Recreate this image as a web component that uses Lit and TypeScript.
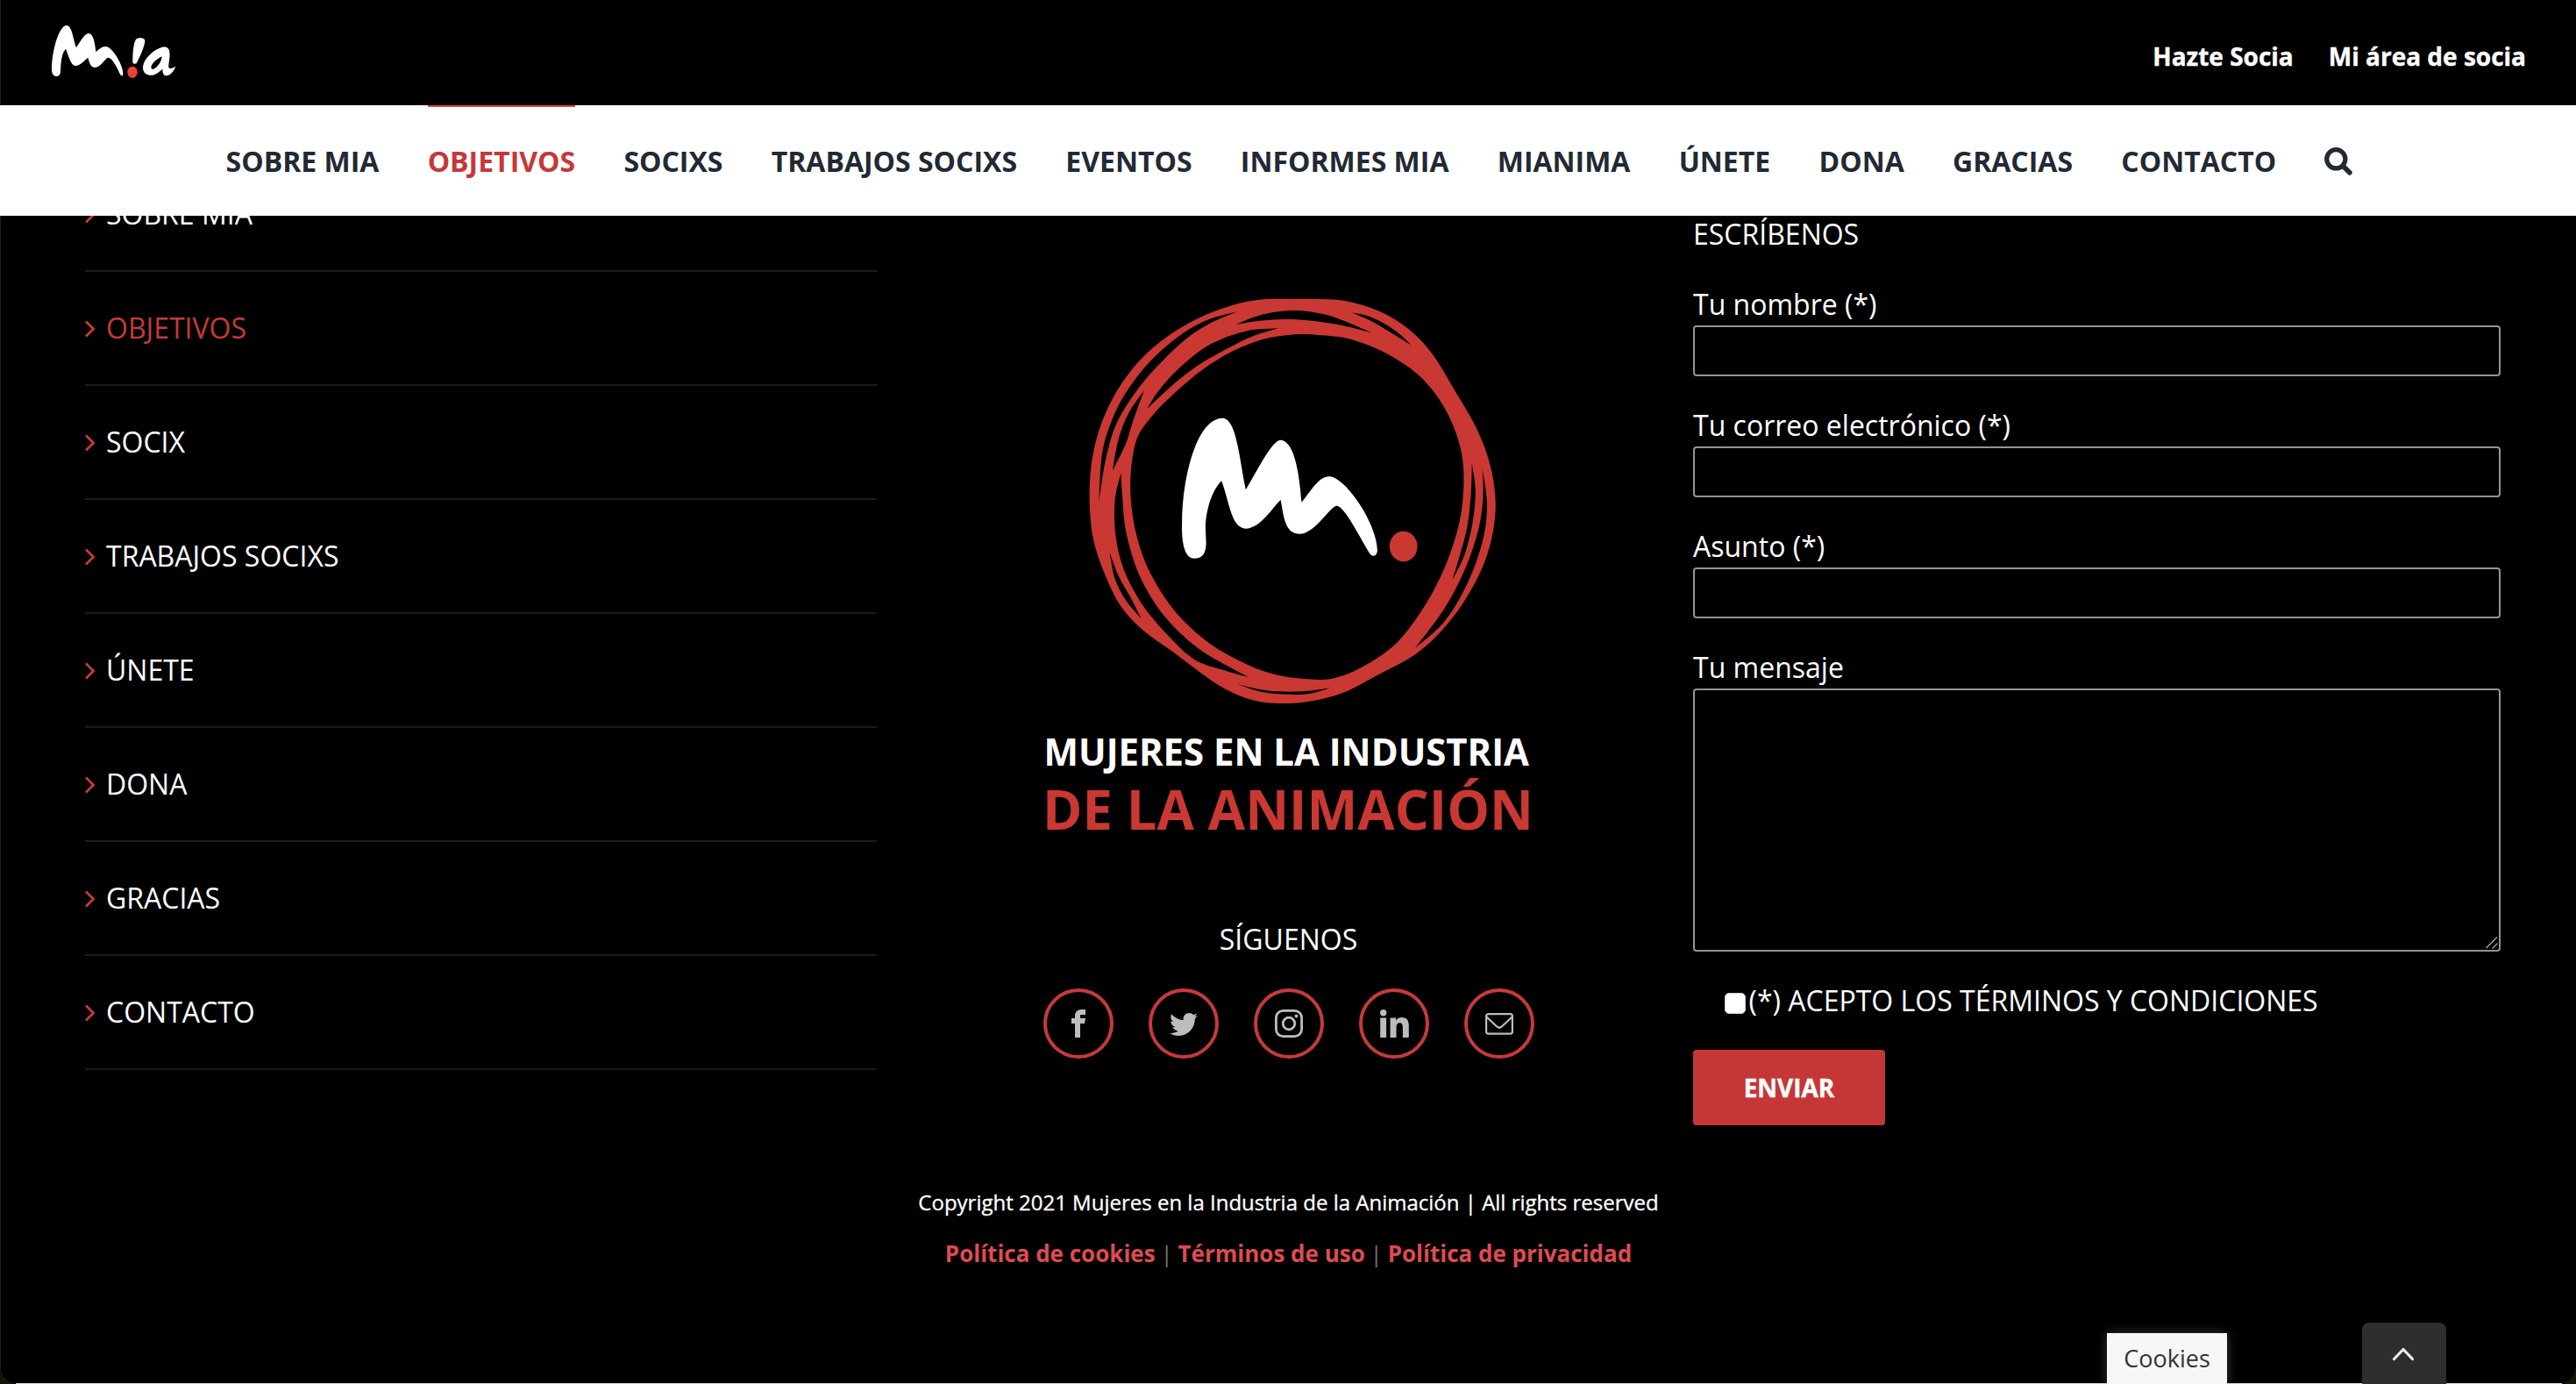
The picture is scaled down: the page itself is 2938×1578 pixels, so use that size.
import { LitElement, html, svg, css } from "lit";
import { customElement, property } from "lit/decorators.js";
import { classMap } from "lit/directives/class-map.js";

type Pt = [number, number];

/** Catmull-Rom spline through the points, as cubic bezier path data. */
function spline(points: Pt[], closed: boolean, start = true): string {
  const n = points.length;
  const at = (i: number): Pt =>
    closed ? points[(i + n) % n] : points[Math.min(n - 1, Math.max(0, i))];
  let d = start ? `M${points[0].join(" ")}` : "";
  const last = closed ? n : n - 1;
  for (let i = 0; i < last; i++) {
    const [p0, p1, p2, p3] = [at(i - 1), at(i), at(i + 1), at(i + 2)];
    d += `C${(p1[0] + (p2[0] - p0[0]) / 6).toFixed(1)} ${(p1[1] + (p2[1] - p0[1]) / 6).toFixed(1)} ${(p2[0] - (p3[0] - p1[0]) / 6).toFixed(1)} ${(p2[1] - (p3[1] - p1[1]) / 6).toFixed(1)} ${p2[0]} ${p2[1]}`;
  }
  return closed ? d + "Z" : d;
}

/** A gap between two brush strands: two splines that meet in sharp tips. */
function sliver(tipA: Pt, sideA: Pt[], tipB: Pt, sideB: Pt[]): string {
  return (
    spline([tipA, ...sideA, tipB], false) +
    spline([tipB, ...sideB, tipA], false, false) +
    "Z"
  );
}

const RING_OUTER: Pt[] = [
  [800, 93], [700, 94], [600, 113], [485, 158], [380, 222], [290, 303], [220, 398],
  [170, 500], [140, 600], [125, 710], [126, 830], [140, 930], [175, 1035], [225, 1140],
  [300, 1225], [400, 1300], [480, 1362], [570, 1425], [670, 1466], [780, 1476],
  [880, 1464], [975, 1435], [1080, 1378], [1200, 1310], [1290, 1227], [1375, 1110],
  [1440, 970], [1468, 820], [1455, 680], [1410, 545], [1330, 400], [1260, 282],
  [1180, 195], [1080, 133], [970, 99], [880, 93],
];
const RING_INNER: Pt[] = [
  [870, 215], [980, 228], [1090, 270], [1190, 333], [1258, 402], [1310, 485],
  [1345, 575], [1362, 670], [1359, 790], [1338, 900], [1290, 1035], [1220, 1165],
  [1135, 1275], [1030, 1350], [940, 1388], [870, 1394], [750, 1380], [640, 1340],
  [520, 1270], [410, 1165], [325, 1030], [277, 890], [259, 735], [276, 585],
  [325, 500], [405, 415], [500, 333], [600, 270], [700, 230], [790, 215],
];
const RING_GAPS: string[] = [
  sliver([615, 135], [[520, 162], [430, 212], [330, 300], [245, 412], [195, 515], [165, 625]], [155, 785],
    [[164, 720], [182, 620], [217, 510], [290, 392], [365, 305], [445, 228], [525, 175]]),
  sliver([305, 405], [[255, 480], [220, 570]], [200, 680], [[243, 590], [268, 510]]),
  sliver([750, 193], [[640, 203], [520, 250], [420, 330], [350, 410]], [315, 468],
    [[390, 395], [480, 322], [570, 268], [660, 222]]),
  sliver([608, 180], [[700, 145], [800, 132], [900, 145], [980, 173]], [1058, 208],
    [[960, 183], [860, 167], [770, 162], [680, 168]]),
  sliver([990, 138], [[1060, 156], [1135, 200]], [1192, 252], [[1130, 213], [1060, 170]]),
  sliver([1390, 655], [[1387, 760], [1375, 870], [1350, 970]], [1325, 1055],
    [[1365, 970], [1392, 860], [1402, 750]]),
  sliver([1425, 675], [[1427, 770], [1412, 880], [1370, 1010], [1300, 1150]], [1202, 1287],
    [[1300, 1195], [1380, 1055], [1428, 910], [1440, 790]]),
  sliver([228, 688], [[208, 780], [210, 900], [238, 1020], [300, 1140], [385, 1245], [470, 1325], [560, 1360]], [652, 1387],
    [[590, 1353], [480, 1285], [370, 1175], [290, 1040], [245, 890], [232, 760]]),
  sliver([190, 958], [[208, 1050], [245, 1125]], [295, 1185], [[258, 1110], [220, 1040]]),
  sliver([612, 1410], [[700, 1430], [790, 1436], [860, 1432]], [920, 1423], [[870, 1439], [800, 1446], [700, 1438]]),
];

const BRUSH_M =
  "M430 860C430 700 480 500 565 500C610 505 617 620 641 745C680 680 728 575 757 575C803 580 818 690 826 788C855 755 880 700 918 700C970 700 1077 860 1077 955C1074 976 1057 976 1050 960C1020 910 968 800 942 800C920 802 870 896 820 896C775 896 768 850 757 780C730 805 690 878 641 878C593 876 588 790 561 715C530 745 507 820 508 880L510 930C508 965 498 980 470 980C440 980 428 930 430 860Z";

const MENU = ["SOBRE MIA", "OBJETIVOS", "SOCIXS", "TRABAJOS SOCIXS", "EVENTOS", "INFORMES MIA", "MIANIMA", "ÚNETE", "DONA", "GRACIAS", "CONTACTO"];
const FOOTER_LINKS = ["SOBRE MIA", "OBJETIVOS", "SOCIX", "TRABAJOS SOCIXS", "ÚNETE", "DONA", "GRACIAS", "CONTACTO"];
const FIELDS = ["Tu nombre (*)", "Tu correo electrónico (*)", "Asunto (*)"];
const ACTIVE = "OBJETIVOS";

const SOCIAL = [
  svg`<path d="M19 6h5V0h-5c-3.86 0-7 3.14-7 7v3H8v6h4v16h6V16h5l1-6h-6V7c0-.542.458-1 1-1z"/>`,
  svg`<path d="M32 7.075c-1.175.525-2.444.875-3.769 1.031 1.356-.813 2.394-2.1 2.887-3.631-1.269.75-2.675 1.3-4.169 1.594-1.2-1.275-2.906-2.069-4.794-2.069-3.625 0-6.563 2.938-6.563 6.563 0 .512.056 1.012.169 1.494-5.456-.275-10.294-2.888-13.531-6.862-.563.969-.887 2.1-.887 3.3 0 2.275 1.156 4.287 2.919 5.463-1.075-.031-2.087-.331-2.975-.819v.081c0 3.181 2.263 5.838 5.269 6.437-.55.15-1.131.231-1.731.231-.425 0-.831-.044-1.237-.119.838 2.606 3.263 4.506 6.131 4.563-2.25 1.762-5.075 2.813-8.156 2.813-.531 0-1.05-.031-1.569-.094 2.913 1.869 6.362 2.95 10.069 2.95 12.075 0 18.681-10.006 18.681-18.681 0-.287-.006-.569-.019-.85 1.281-.919 2.394-2.075 3.275-3.394z"/>`,
  svg`<g fill="none" stroke="currentColor" stroke-width="2.8"><rect x="1.4" y="1.4" width="29.2" height="29.2" rx="8"/><circle cx="16" cy="16" r="6.8"/></g><circle cx="24.5" cy="7.5" r="1.9"/>`,
  svg`<circle cx="3.7" cy="3.7" r="3.7"/><path d="M.2 9.4h6.9V32H.2zM11.6 9.4h6.6v3.2c1.2-2.2 3.5-3.7 6.5-3.7 6.2 0 8.1 3.7 8.1 9.9V32h-6.9V20.5c0-3.2-.9-5.2-3.4-5.2-2.8 0-4 2-4 5.1V32h-6.900z"/>`,
  svg`<g fill="none" stroke="currentColor" stroke-width="2.2"><rect x="1.1" y="5.1" width="29.8" height="22.6" rx="2.5"/><path d="M1.5 8.5 13.5 19.7Q16 21.8 18.5 19.7L30.5 8.5"/></g>`,
];

@customElement("site-header")
class SiteHeader extends LitElement {
  static styles = css`
    :host { display: block; }
    .top { height: 120px; box-sizing: border-box; background: #000; border-left: 1px solid #1c1c1c; display: flex; align-items: center; justify-content: space-between; padding: 0 57px 0 39px; }
    .logo { display: block; width: 180px; height: 100px; }
    .account { display: flex; gap: 40px; padding-top: 8px; font-size: 28px; line-height: 40px; font-weight: 700; color: #fff; -webkit-text-stroke: 0.4px #fff; }
    .menu { height: 126px; box-sizing: border-box; padding-left: 3px; background: #fff; display: flex; justify-content: center; gap: 55.25px; font-size: 32px; font-weight: 700; color: #212934; }
    .entry { display: flex; align-items: center; height: 126px; box-sizing: border-box; border-top: 2px solid transparent; border-bottom: 2px solid transparent; white-space: nowrap; }
    .active { color: #c63838; border-top-color: #e8403a; }
    .search { width: 32px; height: 32px; margin-top: 2px; }
  `;
  render() {
    return html`
      <div class="top">
        <svg class="logo" viewBox="0 0 540 300">
          <path fill="#fff" d="M57 205C57 150 80 57 108 57C126 58 128 95 141 133C155 112 170 84 183 84C198 85 204 110 208 147C220 138 228 129 242 129C265 130 303 195 301 225C300 233 292 228 288 218C278 195 262 167 250 167C240 168 225 201 205 201C190 200 186 185 181 167C170 175 155 195 138 195C121 193 115 160 105 137C92 150 88 180 87 215C86 228 78 232 70 231C60 228 57 220 57 205Z"/>
          <path fill="#fff" d="M345 105C352 97 378 98 376 112C371 140 358 165 347 187C342 190 334 188 334 183C334 160 335 120 345 105Z"/>
          <path fill="#fff" fill-rule="evenodd" d="M455 136C450 128 435 129 425 135C392 150 367 180 369 205C372 230 400 232 415 222C425 216 430 211 436 206C436 221 440 229 450 229C464 227 475 213 481 197C470 204 461 206 457 201C456 186 463 165 460 150C461 145 458 139 455 136ZM433 163C436 173 420 205 402 207C389 204 402 180 433 163Z"/>
          <ellipse fill="#ea4335" cx="333" cy="217" rx="17" ry="20"/>
        </svg>
        <div class="account"><span>Hazte Socia</span><span>Mi área de socia</span></div>
      </div>
      <nav class="menu">
        ${MENU.map((m) => html`<span class=${classMap({ entry: true, active: m === ACTIVE })}>${m}</span>`)}
        <span class="entry">
          <svg class="search" viewBox="0 0 32 32" fill="none" stroke="#212934">
            <circle cx="13.3" cy="13.3" r="10.6" stroke-width="5.2"/>
            <path d="M21.5 21.5 28.8 28.8" stroke-width="5.8" stroke-linecap="round"/>
          </svg>
        </span>
      </nav>`;
  }
}

@customElement("brand-emblem")
class BrandEmblem extends LitElement {
  static styles = css`
    :host { display: block; }
    .art { display: block; width: 600px; height: 660px; }
    .line { font-weight: 700; }
  `;
  render() {
    return html`
      <svg class="art" viewBox="0 0 600 660">
        <g transform="translate(31 0) scale(0.34439 0.33333)">
          <path fill="#c93833" fill-rule="evenodd" d=${spline(RING_OUTER, true) + spline(RING_INNER, true)}/>
          ${RING_GAPS.map((d) => svg`<path fill="#000" d=${d}/>`)}
          <path fill="#fff" d=${BRUSH_M}/>
          <ellipse fill="#c93833" cx="1163.5" cy="939" rx="46" ry="52"/>
        </g>
        <text class="line" x="21.5" y="562.8" font-size="42.5" fill="#fff" textLength="553.5" lengthAdjust="spacingAndGlyphs">MUJERES EN LA INDUSTRIA</text>
        <text class="line" x="20" y="635.5" font-size="62.5" fill="#c93833" textLength="560" lengthAdjust="spacingAndGlyphs">DE LA ANIMACIÓN</text>
      </svg>`;
  }
}

@customElement("contact-form")
class ContactForm extends LitElement {
  @property({ type: Array }) fields: string[] = FIELDS;
  static styles = css`
    :host { display: block; }
    .title { line-height: 40px; margin-bottom: 36px; }
    .field { display: flex; flex-direction: column; line-height: 48px; margin-bottom: 32px; }
    .box { box-sizing: border-box; height: 58px; border: 2px solid #949494; border-radius: 4px; }
    .area { height: 300px; display: flex; align-items: flex-end; justify-content: flex-end; }
    .grip { width: 16px; height: 16px; }
    .accept { display: flex; align-items: center; line-height: 48px; padding-left: 36px; }
    .check { width: 24px; height: 24px; border-radius: 5px; background: #fff; box-sizing: border-box; border: 1px solid #cfcfcf; margin: 6px 3.5px 0 0; }
    .send { display: flex; align-items: center; justify-content: center; width: 219px; height: 86px; margin-top: 32px; border-radius: 4px; background: #c53737; font-size: 28px; font-weight: 700; -webkit-text-stroke: 0.4px #fff; }
  `;
  render() {
    return html`
      <div class="title">ESCRÍBENOS</div>
      ${this.fields.map((f) => html`<label class="field">${f}<span class="box"></span></label>`)}
      <label class="field">Tu mensaje
        <span class="box area">
          <svg class="grip" viewBox="0 0 16 16" stroke="#aaa" stroke-width="1.3"><path d="M1.5 14 14 1.5M8.5 14.5 14.5 8.5"/></svg>
        </span>
      </label>
      <div class="accept"><span class="check"></span>(*) ACEPTO LOS TÉRMINOS Y CONDICIONES</div>
      <div class="send">ENVIAR</div>`;
  }
}

@customElement("app-root")
class AppRoot extends LitElement {
  static styles = css`
    :host { display: block; }
    .page { position: relative; width: 2938px; height: 1578px; overflow: hidden; background: #000; color: #fff; font-family: "Open Sans", "Noto Sans", sans-serif; font-size: 32px; display: flex; flex-direction: column; }
    .body { flex: 1; overflow: hidden; box-sizing: border-box; border-left: 1px solid #1c1c1c; }
    .columns { display: grid; grid-template-columns: 903px 931px 921px; padding-left: 96px; height: 1094px; }
    .links { margin-top: -66px; }
    .row { height: 130px; box-sizing: border-box; border-bottom: 2px solid #1b1b1b; display: flex; align-items: center; gap: 12px; }
    .name { margin-top: -1px; line-height: 44px; }
    .current { color: #c63a3a; }
    .angle { width: 12px; height: 20px; margin-top: 2px; }
    .center { padding: 64px 0 0 7px; display: flex; flex-direction: column; align-items: center; }
    .follow { line-height: 40px; margin: 81px 0 0 1px; }
    .social { display: flex; gap: 40px; margin: 36px 0 0 2px; }
    .round { width: 80px; height: 80px; box-sizing: border-box; border: 4px solid #c63a3c; border-radius: 50%; display: flex; align-items: center; justify-content: center; color: #bdbdbd; }
    .glyph { width: 32px; height: 32px; overflow: visible; fill: currentColor; }
    .form { padding-top: 1px; }
    .legal { display: flex; flex-direction: column; align-items: center; font-size: 26px; padding-top: 4px; }
    .copy { line-height: 54px; font-size: 24px; -webkit-text-stroke: 0.3px #fff; }
    .policies { line-height: 60px; margin-top: 1px; display: flex; gap: 5.8px; color: #747474; }
    .policy { color: #df4b52; font-weight: 700; }
    .cookies { position: absolute; left: 2403px; bottom: 0; width: 137px; height: 58px; background: #f7f7f7; color: #333; font-size: 27px; line-height: 57px; text-align: center; box-shadow: 0 0 12px rgba(140, 140, 140, 0.4); }
    .totop { position: absolute; left: 2694px; bottom: 0; width: 96px; height: 70px; border-radius: 8px 8px 0 0; background: #2e2e2e; display: flex; align-items: center; justify-content: center; }
    .caret { width: 28px; height: 20px; margin: 2px 2px 0 0; }
    .edge { position: absolute; left: 0; bottom: 0; width: 2938px; height: 20px; }
  `;
  render() {
    return html`
      <div class="page">
        <site-header></site-header>
        <main class="body">
          <div class="columns">
            <div class="links">
              ${FOOTER_LINKS.map((l) => html`
                <div class=${classMap({ row: true, current: l === ACTIVE })}>
                  <svg class="angle" viewBox="0 0 12 20" fill="none" stroke="#c93a38" stroke-width="2.8"><path d="M1 1.500 9.500 10 1 18.500"/></svg>
                  <span class="name">${l}</span>
                </div>`)}
            </div>
            <div class="center">
              <brand-emblem></brand-emblem>
              <div class="follow">SÍGUENOS</div>
              <div class="social">
                ${SOCIAL.map((g) => html`<span class="round"><svg class="glyph" viewBox="0 0 32 32">${g}</svg></span>`)}
              </div>
            </div>
            <contact-form class="form"></contact-form>
          </div>
          <footer class="legal">
            <div class="copy">Copyright 2021 Mujeres en la Industria de la Animación | All rights reserved</div>
            <div class="policies">
              <span class="policy">Política de cookies</span><span>|</span><span class="policy">Términos de uso</span><span>|</span><span class="policy">Política de privacidad</span>
            </div>
          </footer>
        </main>
        <svg class="edge" viewBox="0 0 2938 20">
          <path fill="#15150c" d="M0 0V20H20Q3 18 0 0ZM2938 0V20H2918Q2935 18 2938 0Z"/>
          <path fill="#d9d9d9" d="M18 19H2922V20H18Z"/>
        </svg>
        <div class="cookies">Cookies</div>
        <div class="totop">
          <svg class="caret" viewBox="0 0 28 20" fill="none" stroke="#eee" stroke-width="3.2" stroke-linecap="round" stroke-linejoin="round"><path d="M3.5 15.5 14 4.5 24.5 15.5"/></svg>
        </div>
      </div>`;
  }
}
